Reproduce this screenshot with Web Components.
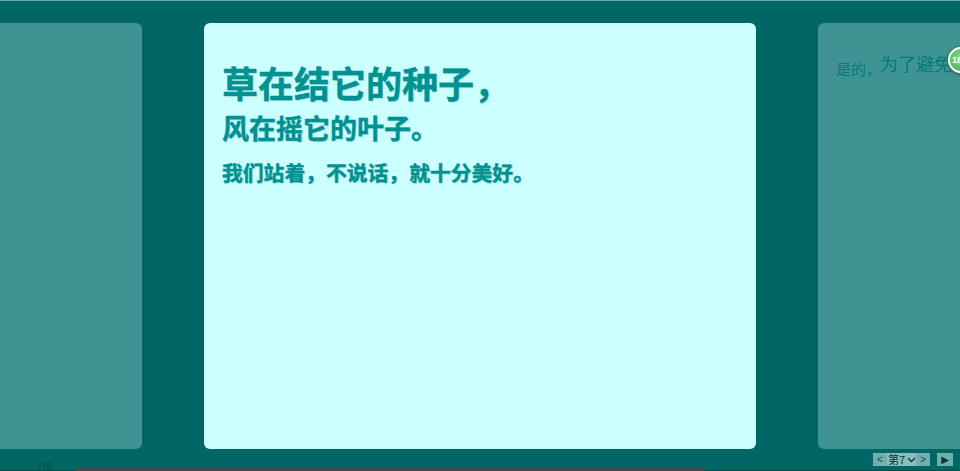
<!DOCTYPE html>
<html lang="zh">
<head>
<meta charset="utf-8">
<title>slides</title>
<style>
html, body { margin: 0; height: 100%; overflow: hidden; background: #006666; }
</style>
</head>
<body>
<slide-deck current="7" total="9">
    <slide-page dim></slide-page>
    <slide-page>
        <h-line size="36" gap="5">草在结它的种子，</h-line>
        <h-line size="27" gap="7">风在摇它的叶子。</h-line>
        <h-line size="20.800" gap="15">我们站着，不说话，就十分美好。</h-line>
    </slide-page>
    <slide-page dim>
        <div style="display:flex;align-items:baseline;margin-top:-9px;color:#007a7a;font-family:'Noto Sans CJK SC',sans-serif;white-space:nowrap">
            <span style="font-size:15px;position:relative;top:4px;margin-right:-1px">是的，</span>
            <span style="font-size:18px">为了避免</span>
        </div>
    </slide-page>
</slide-deck>

<script>
class SlidePage extends HTMLElement {
    constructor() {
        super();
        const shadow = this.attachShadow({mode: 'open'});
        shadow.innerHTML = `
            <style>
                :host {
                    display: block;
                    flex: 0 0 552px;
                    height: 426px;
                    box-sizing: border-box;
                    padding: 36px 18px;
                    border-radius: 6px;
                    background: #ccffff;
                    overflow: hidden;
                }
                :host([dim]) { background: #409393; }
            </style>
            <slot></slot>
        `;
    }
}

class HLine extends HTMLElement {
    constructor() {
        super();
        const shadow = this.attachShadow({mode: 'open'});
        shadow.innerHTML = `
            <style>
                :host {
                    display: block;
                    font-family: "Liberation Sans", "Noto Sans CJK SC", sans-serif;
                    font-weight: bold;
                    color: #009191;
                    line-height: 1.2;
                    white-space: nowrap;
                    -webkit-text-stroke: 0.4px #009191;
                    text-shadow: 1px 1px 1px rgba(0,102,102,.2);
                }
            </style>
            <slot></slot>
        `;
        this.style.fontSize = this.getAttribute('size') + 'px';
        this.style.marginTop = this.getAttribute('gap') + 'px';
    }
}

class NavButton extends HTMLElement {
    constructor() {
        super();
        const shadow = this.attachShadow({mode: 'open'});
        shadow.innerHTML = `
            <style>
                :host {
                    display: flex;
                    align-items: center;
                    justify-content: center;
                    width: 14px;
                    height: 13px;
                    background: #73adad;
                    color: #004c4c;
                    font: 10px/13px "Liberation Sans", sans-serif;
                }
            </style>
            <slot></slot>
        `;
    }
}

class SlideDeck extends HTMLElement {
    constructor() {
        super();
        const current = +this.getAttribute('current');
        const total = +this.getAttribute('total');
        const shadow = this.attachShadow({mode: 'open'});
        shadow.innerHTML = `
            <style>
                :host {
                    display: flex;
                    flex-direction: column;
                    position: relative;
                    height: 471px;
                    overflow: hidden;
                    background: #006666;
                    border-top: 1px solid #70a8a8;
                    box-sizing: border-box;
                }
                .stage {
                    display: flex;
                    justify-content: center;
                    gap: 62px;
                    padding-top: 22px;
                    height: 426px;
                }
                .foot {
                    flex: 1;
                    display: flex;
                    align-items: flex-start;
                    font: 11px "Liberation Sans", sans-serif;
                    color: #004c4c;
                }
                .count { margin: 12px 0 0 37px; line-height: 11px; }
                .nav {
                    margin: 4px 7px 0 auto;
                    display: flex;
                    align-items: center;
                }
                .page {
                    display: flex;
                    align-items: center;
                    width: 29px;
                    box-sizing: border-box;
                    height: 13px;
                    padding: 0 0 0 1px;
                    background: #8cbcbc;
                    font: 11px/13px "Noto Sans CJK SC", sans-serif;
                    color: #003c3c;
                    white-space: nowrap;
                }
                .page svg { flex: none; margin-left: 2px; }
                .play { margin-left: 7px; width: 16px; font: 10px/13px "DejaVu Sans", sans-serif; color: #003c3c; }
                .bar {
                    position: absolute;
                    left: 0; right: 0; bottom: 0;
                    height: 1px;
                    background: #004c4c;
                }
                .bar i {
                    position: absolute;
                    left: 75px; width: 630px; height: 3px; bottom: 0;
                    background: #3f4a4a;
                }
                .badge {
                    position: absolute;
                    left: 948px; top: 46px;
                    width: 26px; height: 26px;
                    box-sizing: border-box;
                    border: 2px solid #fff;
                    border-radius: 50%;
                    background: radial-gradient(circle at 50% 40%, #8be08b, #3fa84f);
                    box-shadow: 0 0 0 1px #2f7f4f, 0 1px 3px rgba(0,0,0,.5);
                    color: #fff;
                    font: bold 9px/22px "Liberation Sans", sans-serif;
                    padding-left: 2px;
                }
            </style>
            <div class="stage"><slot></slot></div>
            <div class="foot">
                <span class="count">${current}/${total}</span>
                <div class="nav">
                    <nav-button>&lt;</nav-button>
                    <div class="page">第${current}<svg width="9" height="6" viewBox="0 0 9 6"><path d="M1 1 4.500 4.500 8 1" fill="none" stroke="currentColor" stroke-width="1.300"/></svg></div>
                    <nav-button>&gt;</nav-button>
                    <nav-button class="play">▶</nav-button>
                </div>
            </div>
            <div class="bar"><i></i></div>
            <div class="badge">18</div>
        `;
    }
}

customElements.define('slide-page', SlidePage);
customElements.define('h-line', HLine);
customElements.define('nav-button', NavButton);
customElements.define('slide-deck', SlideDeck);
</script>
</body>
</html>
